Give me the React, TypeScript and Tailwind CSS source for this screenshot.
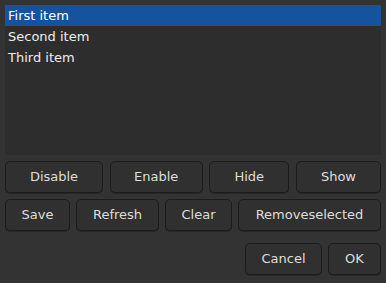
import React from "react";

const items = ["First item", "Second item", "Third item"];

function Btn({ label, w }: { label: string; w: string }) {
  return (
    <button
      className={`${w} h-[32px] rounded-[5px] border border-[#1c1c1c] bg-[#303030] text-[13px] text-[#dededc] shadow-[0_1px_0_rgba(0,0,0,0.25)]`}
    >
      {label}
    </button>
  );
}

export default function App() {
  return (
    <div
      className="flex h-[283px] w-[386px] flex-col bg-[#333333] px-[5px] pt-[5px]"
      style={{ fontFamily: '"DejaVu Sans", sans-serif' }}
    >
      <div className="h-[150px] bg-[#2d2d2d]">
        {items.map((it, i) => (
          <div
            key={it}
            className={`flex h-[21px] items-center px-[3px] text-[13px] ${
              i === 0 ? "bg-[#15539e] text-white" : "text-[#eeeeec]"
            }`}
          >
            {it}
          </div>
        ))}
      </div>

      <div className="mt-[6px] flex justify-between">
        <Btn label="Disable" w="w-[98px]" />
        <Btn label="Enable" w="w-[93px]" />
        <Btn label="Hide" w="w-[80px]" />
        <Btn label="Show" w="w-[85px]" />
      </div>

      <div className="mt-[6px] flex justify-between">
        <Btn label="Save" w="w-[65px]" />
        <Btn label="Refresh" w="w-[83px]" />
        <Btn label="Clear" w="w-[67px]" />
        <Btn label="Removeselected" w="w-[143px]" />
      </div>

      <div className="mt-[12px] flex justify-end gap-[6px]">
        <Btn label="Cancel" w="w-[77px]" />
        <Btn label="OK" w="w-[53px]" />
      </div>
    </div>
  );
}
